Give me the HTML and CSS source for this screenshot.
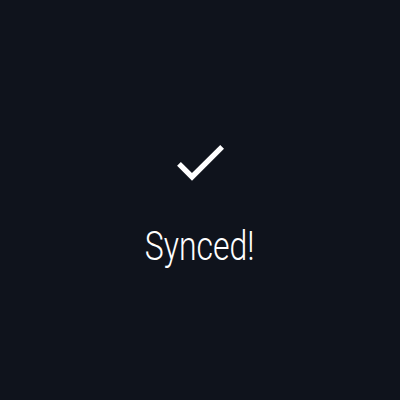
FILE: index.html
```html
<!DOCTYPE html>
<html>
<head>
<meta charset="utf-8">
<link rel="stylesheet" href="styles.css">
</head>
<body>
<main class="screen">
  <svg class="check" viewBox="0 0 24 24" width="64" height="64" aria-hidden="true">
    <path d="M9 16.17L4.83 12l-1.42 1.41L9 19 21 7l-1.41-1.41z" fill="#ffffff"/>
  </svg>
  <div class="label">Synced!</div>
</main>
</body>
</html>
```
FILE: styles.css
```css
html, body {
  margin: 0;
  padding: 0;
  background: #0f131c;
}
.screen {
  width: 400px;
  height: 400px;
  display: flex;
  flex-direction: column;
  align-items: center;
  justify-content: flex-start;
  box-sizing: border-box;
  padding-top: 130px;
}
.check {
  display: block;
}
.label {
  margin-top: 30px;
  font-family: Roboto, "Noto Sans", sans-serif;
  font-weight: 300;
  font-size: 40px;
  line-height: 46px;
  color: #ffffff;
  transform: scaleX(0.8);
}
```
